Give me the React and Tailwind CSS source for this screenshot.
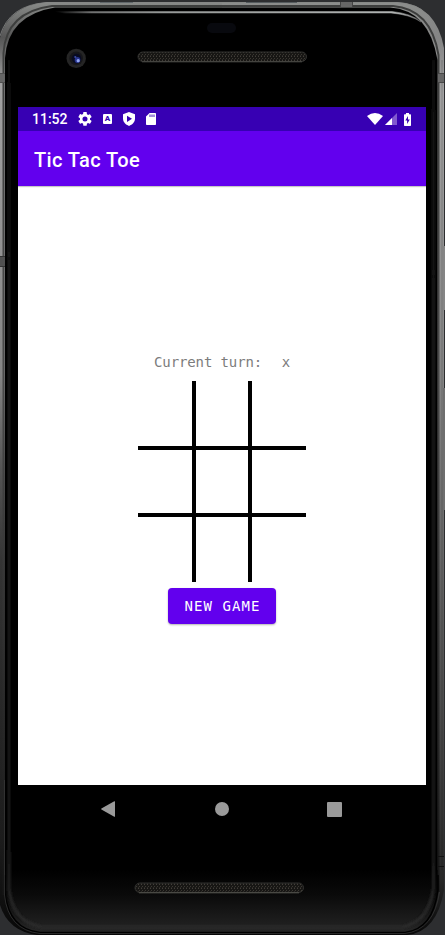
import React from "react";

function DeviceFrame() {
  return (
    <svg className="absolute inset-0" width="445" height="935" viewBox="0 0 445 935" aria-hidden="true">
      <defs>
        <linearGradient id="metalLeft" x1="0" y1="0" x2="0" y2="935" gradientUnits="userSpaceOnUse">
          <stop offset="0" stopColor="#8c8e8c" />
          <stop offset="0.04" stopColor="#555" />
          <stop offset="0.09" stopColor="#a2a2a2" />
          <stop offset="0.4" stopColor="#858585" />
          <stop offset="0.5" stopColor="#555" />
          <stop offset="0.6" stopColor="#343434" />
          <stop offset="0.9" stopColor="#1c1c1c" />
          <stop offset="1" stopColor="#080808" />
        </linearGradient>
        <linearGradient id="metalRight" x1="0" y1="0" x2="0" y2="935" gradientUnits="userSpaceOnUse">
          <stop offset="0" stopColor="#8c8e8c" />
          <stop offset="0.04" stopColor="#858585" />
          <stop offset="0.1" stopColor="#a2a2a2" />
          <stop offset="0.4" stopColor="#858585" />
          <stop offset="0.6" stopColor="#666" />
          <stop offset="0.8" stopColor="#444" />
          <stop offset="0.94" stopColor="#282828" />
          <stop offset="1" stopColor="#080808" />
        </linearGradient>
        <linearGradient id="groove" x1="0" y1="0" x2="0" y2="935" gradientUnits="userSpaceOnUse">
          <stop offset="0" stopColor="#3c3d3c" />
          <stop offset="0.4" stopColor="#4a4a4a" />
          <stop offset="0.8" stopColor="#262626" />
          <stop offset="1" stopColor="#111" />
        </linearGradient>
        <linearGradient id="chin" x1="0" y1="870" x2="0" y2="932" gradientUnits="userSpaceOnUse">
          <stop offset="0" stopColor="#000" />
          <stop offset="0.4" stopColor="#0a0a0a" />
          <stop offset="0.85" stopColor="#1e1e1e" />
          <stop offset="1" stopColor="#272727" />
        </linearGradient>
        <linearGradient id="side" x1="0" y1="20" x2="0" y2="932" gradientUnits="userSpaceOnUse">
          <stop offset="0" stopColor="#030303" />
          <stop offset="0.15" stopColor="#191919" />
          <stop offset="0.9" stopColor="#1b1b1b" />
          <stop offset="1" stopColor="#2c2c2c" />
        </linearGradient>
        <linearGradient id="gleam" x1="55" y1="0" x2="421" y2="0" gradientUnits="userSpaceOnUse">
          <stop offset="0" stopColor="#000" />
          <stop offset="0.1" stopColor="#6f7070" />
          <stop offset="0.3" stopColor="#969998" />
          <stop offset="0.93" stopColor="#b0b3b2" />
          <stop offset="1" stopColor="#777" />
        </linearGradient>
        <pattern id="mesh" width="3" height="4" patternUnits="userSpaceOnUse">
          <rect width="3" height="4" fill="#171614" />
          <rect width="1" height="1" x="0" y="0" fill="#423e39" />
          <rect width="1" height="1" x="1" y="2" fill="#3b3832" />
          <rect width="1" height="1" x="0" y="3" fill="#2b2926" />
        </pattern>
        <filter id="soft" x="-10%" y="-10%" width="120%" height="120%">
          <feGaussianBlur stdDeviation="1.1" />
        </filter>
      </defs>
      <rect width="445" height="935" fill="#2d2e30" />
      <path d="M0 38 Q8 6 47 2 H222 V935 H37 Q8 931 0 905Z" fill="url(#metalLeft)" />
      <path d="M222 2 H397 Q436 4 444 48 V890 Q437 932 407 935 H222Z" fill="url(#metalRight)" />
      <path d="M3.5 895 V53 Q6 12 52 6 H393 Q431 9 438.5 55 V892" fill="none" stroke="url(#groove)" strokeWidth="2" />
      <path d="M0 36 Q9 5 47 2.5 H397 Q434 4 441 45" fill="none" stroke="#858785" strokeWidth=".8" />
      <path d="M442 60 V870" stroke="#000" strokeOpacity=".18" />
      <path d="M5 58 Q8 15 55 7.5 H390 Q429 10 437.5 60 V890 Q433 929 405 932.5 H40 Q9 929 5 893Z" fill="#000" />
      <path d="M5 870 H437.5 V890 Q433 929 405 932.5 H40 Q9 929 5 893Z" fill="url(#chin)" />
      <g filter="url(#soft)" fill="none" stroke="url(#side)" strokeWidth="3">
        <path d="M9 60 V888 Q12 922 42 927 H402 Q429 922 433.5 888 V60" />
      </g>
      <path d="M5 875 V893 Q9 929 40 932.5 H405 Q433 929 438 890 V875" fill="none" stroke="#000" strokeWidth="1.5" />
      <path d="M4.5 780 V895 Q8 930 40 933.5 H405 Q434 930 439.5 892" fill="none" stroke="#3a3a3a" strokeWidth=".7" />
      <path d="M55 11.5 H392 Q412 13.5 421 22 Q410 14.5 391 13 H65Z" fill="url(#gleam)" stroke="url(#gleam)" strokeWidth=".5" />
      <rect x="100" y="2" width="33" height="1" fill="#61676b" />
      <rect x="246" y="2" width="51" height="1" fill="#555b5e" />
      <rect x="340" y="2" width="13" height="5" fill="#666" />
      <path d="M340.5 2V7M352.5 2V7" stroke="#444" />
      <rect x="0" y="73" width="5" height="10" fill="#666" />
      <path d="M0 73.5H5M0 82.5H5" stroke="#505050" />
      <rect x="438" y="73" width="6" height="10" fill="#666" />
      <path d="M438 73.5H444M438 82.5H444" stroke="#484848" />
      <rect x="0" y="256" width="5" height="11" fill="#505050" />
      <path d="M0 256.5H5M0 266.5H5" stroke="#333" />
      <path d="M438 856.5H444M438 866.5H444" stroke="#111" />
      <rect x="443" y="246" width="2" height="64" fill="#858585" />
      <rect x="443" y="388" width="2" height="122" fill="#6e6e6e" />
      <rect x="207" y="23" width="29" height="10" rx="5" fill="#08090e" />
      <circle cx="76.2" cy="58.4" r="9.7" fill="#252525" />
      <circle cx="76.2" cy="58.4" r="6.8" fill="#17171a" />
      <circle cx="76.5" cy="58.6" r="4.8" fill="#080b22" />
      <ellipse cx="77.5" cy="60" rx="2.8" ry="3" fill="#27348c" />
      <circle cx="78.2" cy="60.7" r="1.6" fill="#93a6f2" />
      <circle cx="75.3" cy="57" r="1.1" fill="#3c4da5" />
      <rect x="138" y="52" width="168.5" height="9.5" rx="4.75" fill="url(#mesh)" stroke="#30302e" />
      <path d="M142 61.8H302" stroke="#4c4c48" />
      <rect x="135" y="883" width="168.5" height="9.5" rx="4.75" fill="url(#mesh)" stroke="#30302e" />
      <path d="M139 892.8H299" stroke="#55554f" />
    </svg>
  );
}

function StatusBar() {
  return (
    <div className="flex h-6 items-center justify-between bg-[#3700b3] pr-[15px] pl-[14px] text-white">
      <div className="flex items-center">
        <span className="w-[46px] font-['Roboto',sans-serif] text-[14px] leading-6 font-medium">11:52</span>
        <svg width="14" height="14" viewBox="2 2 20 20" fill="currentColor">
          <path d="M19.14 12.94c.04-.3.06-.61.06-.94s-.02-.64-.07-.94l2.03-1.58a.49.49 0 0 0 .12-.61l-1.92-3.32a.49.49 0 0 0-.59-.22l-2.39.96a7 7 0 0 0-1.62-.94l-.36-2.54A.48.48 0 0 0 13.92 2h-3.84a.47.47 0 0 0-.47.41l-.36 2.54c-.59.24-1.13.57-1.62.94l-2.39-.96a.48.48 0 0 0-.59.22L2.74 8.87a.48.48 0 0 0 .12.61l2.03 1.58c-.05.3-.09.63-.09.94s.02.64.07.94l-2.03 1.58a.49.49 0 0 0-.12.61l1.92 3.32c.12.22.37.29.59.22l2.39-.96c.5.38 1.03.7 1.62.94l.36 2.54c.05.24.24.41.48.41h3.84c.24 0 .44-.17.47-.41l.36-2.54a7 7 0 0 0 1.62-.94l2.39.96c.22.08.47 0 .59-.22l1.92-3.32a.47.47 0 0 0-.12-.61zM12 15.6A3.6 3.6 0 1 1 12 8.4a3.6 3.6 0 0 1 0 7.2z" />
        </svg>
        <span className="ml-[11px] flex h-2.5 w-[9px] items-center justify-center rounded-[1px] bg-white font-['Roboto',sans-serif] text-[8px] leading-none font-black text-[#3700b3]">A</span>
        <svg className="ml-[11px]" width="12" height="14" viewBox="0 0 12 14">
          <path d="M6 0 12 2.2V6.6C12 10 9.5 12.7 6 14 2.5 12.7 0 10 0 6.6V2.2Z" fill="white" />
          <path d="M4 3.7 9 6.8 4 9.9Z" fill="#3700b3" />
        </svg>
        <svg className="ml-[11px]" width="10" height="12" viewBox="0 0 10 12">
          <path d="M3.6 0H9.2Q10 0 10 .8V11.2Q10 12 9.2 12H.8Q0 12 0 11.2V3.6Z" fill="white" />
          <path d="M4 1.5V4M6 1.5V4M8 1.5V4" stroke="#3700b3" strokeWidth=".9" />
        </svg>
      </div>
      <div className="flex items-center">
        <svg width="16" height="12" viewBox="0 0 16 12">
          <path d="M0 3Q8-3 16 3L8 12Z" fill="white" />
        </svg>
        <svg className="ml-[2px]" width="12" height="12" viewBox="0 0 12 12">
          <path d="M0 12 12 0V12Z" fill="#8059cf" />
          <path d="M0 12 7 5V12Z" fill="white" />
        </svg>
        <svg className="ml-[7px]" width="7" height="13" viewBox="0 0 7 13">
          <path d="M2 0H5V1.2H6.3Q7 1.2 7 2V12.2Q7 13 6.3 13H.7Q0 13 0 12.2V2Q0 1.2.7 1.2H2Z" fill="white" />
          <path d="M4 3 1.3 7.5H3.1V11L5.8 6.4H4Z" fill="#3700b3" />
        </svg>
      </div>
    </div>
  );
}

function Board() {
  const cells = Array.from({ length: 9 }, (_, i) => i);
  return (
    <div className="grid h-[201px] w-[168px] grid-cols-[54px_52px_54px] grid-rows-[65px_63px_65px] gap-1 bg-black">
      {cells.map((i) => (
        <div key={i} className="bg-white" />
      ))}
    </div>
  );
}

function NavBar() {
  return (
    <div className="flex h-12 items-center justify-between pr-[84px] pl-[83px] text-[#9a9a9a]">
      <svg width="14" height="16" viewBox="0 0 14 16">
        <path d="M13.3.3Q14 0 14 .8V15.2Q14 16 13.3 15.7L.4 8.5Q0 8 .4 7.5Z" fill="currentColor" />
      </svg>
      <div className="ml-[2px] size-[14px] rounded-full bg-[#9a9a9a]" />
      <div className="size-[15px] rounded-[1px] bg-[#9a9a9a]" />
    </div>
  );
}

export default function App() {
  return (
    <div className="relative h-[935px] w-[445px] overflow-hidden bg-[#2d2e30]">
      <DeviceFrame />
      <main className="relative pt-[107px] pl-[18px]">
        <div className="w-[408px]">
          <StatusBar />
          <header className="relative flex h-[55px] items-center bg-[#6200ee] pt-[2px] pl-4 font-['Roboto',sans-serif] text-[20px] font-medium tracking-[0.4px] text-white shadow-[0_1px_1px_rgba(0,0,0,0.22)]">
            Tic Tac Toe
          </header>
          <section className="flex h-[599px] flex-col items-center bg-white pt-[167px]">
            <p className="h-7 whitespace-pre font-['DejaVu_Sans_Mono',monospace] text-[14px] leading-[19px] tracking-[-0.11px] text-[#7c7c7c]">
              Current turn:<span className="ml-[19.5px]">x</span>
            </p>
            <Board />
            <button className="mt-[6px] h-9 w-[108px] rounded-[4px] bg-[#6200ee] pt-[1px] pl-[1px] font-['DejaVu_Sans_Mono',monospace] text-[14px] tracking-[1.05px] whitespace-nowrap text-white shadow-[0_1px_2px_rgba(0,0,0,0.3)]">
              NEW GAME
            </button>
          </section>
          <NavBar />
        </div>
      </main>
    </div>
  );
}
